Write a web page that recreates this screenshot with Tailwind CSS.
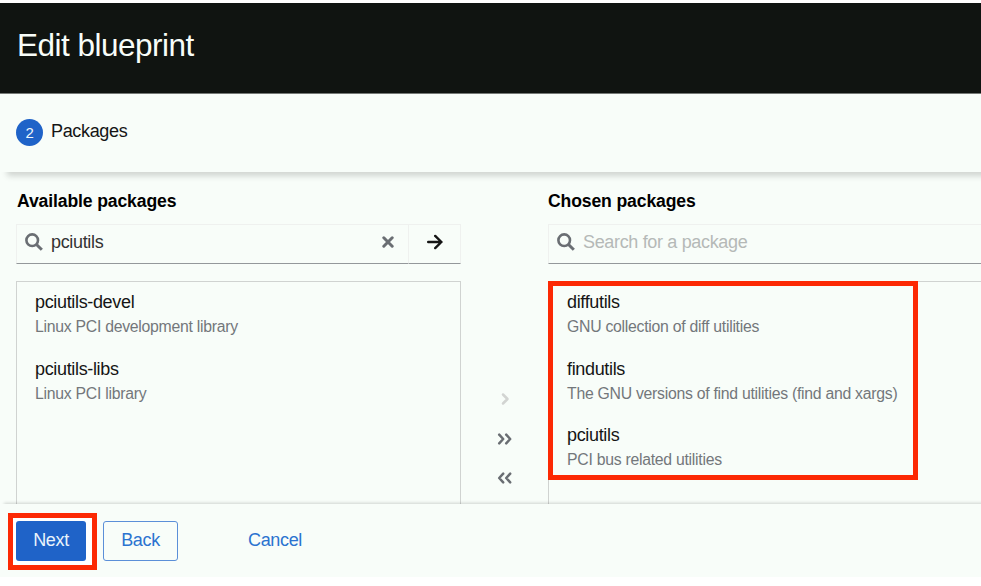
<!DOCTYPE html>
<html lang="en">
<head>
<meta charset="utf-8">
<title>Edit blueprint</title>
<script src="https://cdn.jsdelivr.net/npm/@tailwindcss/browser@4"></script>
</head>
<body class="h-[586px] w-[981px] overflow-hidden bg-white font-['Liberation_Sans',Arial,sans-serif] text-[18px] leading-[26px] tracking-[-0.34px] text-[#151515]">
<div class="relative mt-[3px] flex h-[574px] flex-col overflow-hidden bg-[#f8fdf9]">
  <header class="flex h-[91px] shrink-0 items-start border-b border-[#777b78] bg-[#101411] pl-[17px] pt-[22px]">
    <h1 class="text-[31.5px] leading-[40px] tracking-[-0.5px] text-[#f8fdf9]">Edit blueprint</h1>
  </header>
  <nav class="flex h-[78px] shrink-0 items-center gap-[8px] pl-4 shadow-[7px_4px_6px_rgba(3,3,3,0.16)]">
    <span class="-mt-[2px] flex size-[27px] items-center justify-center rounded-full bg-[#1f63c8] text-[15px] leading-none text-[#f0f7fb]">2</span>
    <span class="-mt-[4px]">Packages</span>
  </nav>
  <main class="flex h-[332px] shrink-0 overflow-hidden pl-4 pt-4">
    <section class="flex w-[445px] shrink-0 flex-col">
      <h2 class="pl-px text-[17.6px] font-bold tracking-[-0.13px] text-black">Available packages</h2>
      <div class="mt-[10px] flex h-[40px] shrink-0">
        <div class="flex w-[393px] items-center border border-[#eff1ef] border-b-[#94989b] pl-2">
          <svg class="size-[18px] shrink-0 -translate-y-[2px]" viewBox="0 0 18 18" fill="none" stroke="#6a6e73" stroke-width="2.6"><circle cx="7.2" cy="7.2" r="5.8"/><path d="M11.5 11.5L16.8 16.8" stroke-width="3"/></svg>
          <span class="ml-[8px] -mt-[4px] flex-1 text-[#333]">pciutils</span>
          <svg class="mr-[14px] size-[12px] -translate-y-[2px]" viewBox="0 0 12 12" stroke="#6a6e73" stroke-width="3" stroke-linecap="round"><path d="M1.8 1.8l8.4 8.4M10.2 1.8L1.8 10.2"/></svg>
        </div>
        <div class="flex w-[52px] items-center justify-center border border-l-0 border-[#eff1ef] border-b-[#94989b]">
          <svg class="h-[16px] w-[16px] -translate-y-[2px]" viewBox="0 0 16 16" fill="none" stroke="#151515" stroke-width="2.4" stroke-linecap="round"><path d="M1.2 8h13M8.2 1.9L14.4 8l-6.2 6.1"/></svg>
        </div>
      </div>
      <div class="mt-[17px] h-[240px] shrink-0 border border-[#d0d3d1] pl-[18px] pt-[7px]">
        <div class="h-[66.5px]"><p>pciutils-devel</p><p class="text-[15.8px] leading-[23px] tracking-[-0.27px] text-[#73777b]">Linux PCI development library</p></div>
        <div class="h-[66.5px]"><p>pciutils-libs</p><p class="text-[15.8px] leading-[23px] tracking-[-0.27px] text-[#73777b]">Linux PCI library</p></div>
      </div>
    </section>
    <div class="flex w-[87px] shrink-0 flex-col items-center gap-[25.5px] pt-[204px]">
      <svg class="h-[14px] w-[16px]" viewBox="0 0 16 14" fill="none" stroke="#d2d4d2" stroke-width="2.5" stroke-linecap="round" stroke-linejoin="round"><path d="M6 2.5L10.5 7 6 11.5"/></svg>
      <svg class="h-[14px] w-[16px]" viewBox="0 0 16 14" fill="none" stroke="#6a6e73" stroke-width="2.5" stroke-linecap="round" stroke-linejoin="round"><path d="M2.2 2.7L6.2 7l-4 4.3M9.2 2.7l4 4.3-4 4.3"/></svg>
      <svg class="h-[14px] w-[16px]" viewBox="0 0 16 14" fill="none" stroke="#6a6e73" stroke-width="2.5" stroke-linecap="round" stroke-linejoin="round"><path d="M6.2 2.7L2.2 7l4 4.3M13.2 2.7l-4 4.3 4 4.3"/></svg>
    </div>
    <section class="flex w-[445px] shrink-0 flex-col">
      <h2 class="text-[17.6px] font-bold tracking-[-0.13px] text-black">Chosen packages</h2>
      <div class="mt-[10px] flex h-[40px] shrink-0 items-center border border-[#eff1ef] border-b-[#94989b] pl-2">
        <svg class="size-[18px] shrink-0 -translate-y-[2px]" viewBox="0 0 18 18" fill="none" stroke="#6a6e73" stroke-width="2.6"><circle cx="7.2" cy="7.2" r="5.8"/><path d="M11.5 11.5L16.8 16.8" stroke-width="3"/></svg>
        <span class="ml-[8px] -mt-[4px] text-[#b5b9b7]">Search for a package</span>
      </div>
      <div class="relative mt-[17px] h-[240px] shrink-0 border border-[#d0d3d1] pl-[18px] pt-[7px]">
        <div class="h-[66.5px]"><p>diffutils</p><p class="text-[15.8px] leading-[23px] tracking-[-0.27px] text-[#73777b]">GNU collection of diff utilities</p></div>
        <div class="h-[66.5px]"><p>findutils</p><p class="text-[15.8px] leading-[23px] tracking-[-0.27px] text-[#73777b]">The GNU versions of find utilities (find and xargs)</p></div>
        <div class="h-[66.5px]"><p>pciutils</p><p class="text-[15.8px] leading-[23px] tracking-[-0.27px] text-[#73777b]">PCI bus related utilities</p></div>
        <div class="absolute -left-px -top-px h-[199px] w-[370px] border-[5px] border-[#fc2904]"></div>
      </div>
    </section>
  </main>
  <footer class="relative flex h-[73px] shrink-0 items-start bg-[#f8fdf9] pl-4 pt-[17px] shadow-[4px_-1px_3px_rgba(3,3,3,0.17)]">
    <div class="relative">
      <div class="absolute -left-2 -top-2 h-[57px] w-[89px] border-[5px] border-[#fc2904] bg-white"></div>
      <button class="relative block h-[40px] w-[70px] rounded-[3px] bg-[#1f63c8] pb-[3px] text-[#e9f3fb]">Next</button>
    </div>
    <button class="ml-[17px] h-[40px] w-[75px] rounded-[3px] border border-[#5b8fd8] pb-[3px] text-[#2b73d0]">Back</button>
    <button class="ml-[70px] h-[40px] pb-[3px] text-[#2b73d0]">Cancel</button>
  </footer>
</div>
</body>
</html>
